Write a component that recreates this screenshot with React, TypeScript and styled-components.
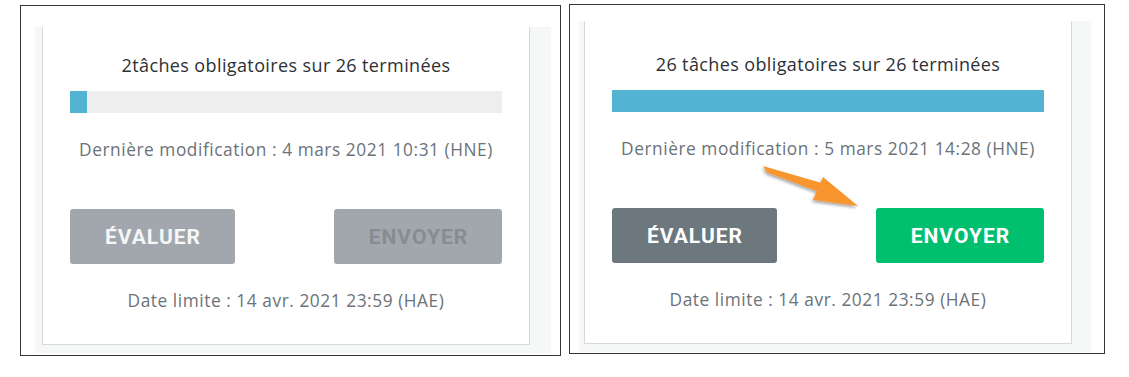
import * as React from "react";
import styled, {createGlobalStyle, css} from "styled-components";

const GlobalStyle = createGlobalStyle`
  body {
    margin: 0;
    background: #fff;
    font-family: "Open Sans", "Liberation Sans", sans-serif;
  }
`

const Page = styled.div`
  display: flex;
  align-items: flex-start;
  gap: 8px;
  padding: 4px 0 0 20px;
`

const Frame = styled.div<{ $pad: string, $offset?: number }>`
  border: 1px solid #363636;
  padding: ${({$pad}) => $pad};
  margin-top: ${({$offset}) => $offset || 0}px;
`

const Panel = styled.div<{ $pad: string }>`
  background: #f6f7f7;
  padding: ${({$pad}) => $pad};
`

const Card = styled.div<{ $top: number }>`
  position: relative;
  box-sizing: border-box;
  width: 488px;
  background: #fff;
  border: 1px solid #d6d9da;
  border-top: none;
  padding: ${({$top}) => $top}px 27px 32px;
  display: flex;
  flex-direction: column;
`

const Title = styled.div`
  font-size: 18px;
  line-height: 24px;
  letter-spacing: 0.38px;
  color: #2c3136;
  text-align: center;
`

const Track = styled.div`
  height: 22px;
  margin-top: 14px;
  background: #eeeeee;
`

const Fill = styled.div<{ $pct: number }>`
  height: 100%;
  width: ${({$pct}) => $pct}%;
  background: #52b3d2;
`

const Meta = styled.div<{ $mt: number }>`
  margin-top: ${({$mt}) => $mt}px;
  font-size: 17.3px;
  line-height: 22px;
  letter-spacing: 0.56px;
  color: #6b7278;
  text-align: center;
  white-space: nowrap;
`

const Actions = styled.div`
  display: flex;
  justify-content: space-between;
  margin-top: 48px;
`

type Tone = 'muted' | 'off' | 'dark' | 'go'

const tones = {
  muted: css`background: #a1a7ac; color: #f5f6f7;`,
  off: css`background: #a1a7ac; color: #868c91;`,
  dark: css`background: #6c777e; color: #fff;`,
  go: css`background: #00bf6f; color: #fff;`,
}

const Button = styled.button<{ $tone: Tone, $w: number }>`
  width: ${({$w}) => $w}px;
  height: 55px;
  border: none;
  border-radius: 3px;
  padding: 0 0 0 1px;
  font-family: Roboto, "Liberation Sans", sans-serif;
  font-size: 21px;
  font-weight: 700;
  letter-spacing: 1px;
  cursor: pointer;
  ${({$tone}) => tones[$tone]}
`

const Arrow = styled.svg`
  position: absolute;
  left: 170px;
  top: 139px;
  overflow: visible;
`

const PointerArrow = () => (
  <Arrow width="115" height="55" viewBox="755 160 115 55">
    <defs>
      <filter id="arrowShadow" x="-20%" y="-30%" width="140%" height="170%">
        <feDropShadow dx="-1" dy="2" stdDeviation="1.4" floodColor="#000" floodOpacity="0.35"/>
      </filter>
    </defs>
    <g filter="url(#arrowShadow)" fill="#f8952f">
      <polygon points="763,166 767,172.5 830,196 832,186"/>
      <polygon points="823,177 858,206 813,200"/>
    </g>
  </Arrow>
)

type Task = {
  done: string,
  pct: number,
  modified: string,
  canSend: boolean,
}

const TaskCard = ({task, top, arrow}: { task: Task, top: number, arrow?: boolean }) => (
  <Card $top={top}>
    <Title>{task.done} obligatoires sur 26 terminées</Title>
    <Track><Fill $pct={task.pct}/></Track>
    <Meta $mt={26}>Dernière modification : {task.modified} (HNE)</Meta>
    <Actions>
      <Button $tone={task.canSend ? 'dark' : 'muted'} $w={165}>ÉVALUER</Button>
      <Button $tone={task.canSend ? 'go' : 'off'} $w={168}>ENVOYER</Button>
    </Actions>
    <Meta $mt={26}>Date limite : 14 avr. 2021 23:59 (HAE)</Meta>
    {arrow && <PointerArrow/>}
  </Card>
)

export default function App() {
  return (
    <>
      <GlobalStyle/>
      <Page>
        <Frame $pad="21px 9px 2px 14px" $offset={1}>
          <Panel $pad="0 21px 8px 7px">
            <TaskCard top={26} task={{done: '2tâches', pct: 4, modified: '4 mars 2021 10:31', canSend: false}}/>
          </Panel>
        </Frame>
        <Frame $pad="16px 13px 1px 9px">
          <Panel $pad="0 19px 8px 5px">
            <TaskCard top={31} arrow task={{done: '26 tâches', pct: 100, modified: '5 mars 2021 14:28', canSend: true}}/>
          </Panel>
        </Frame>
      </Page>
    </>
  )
}
